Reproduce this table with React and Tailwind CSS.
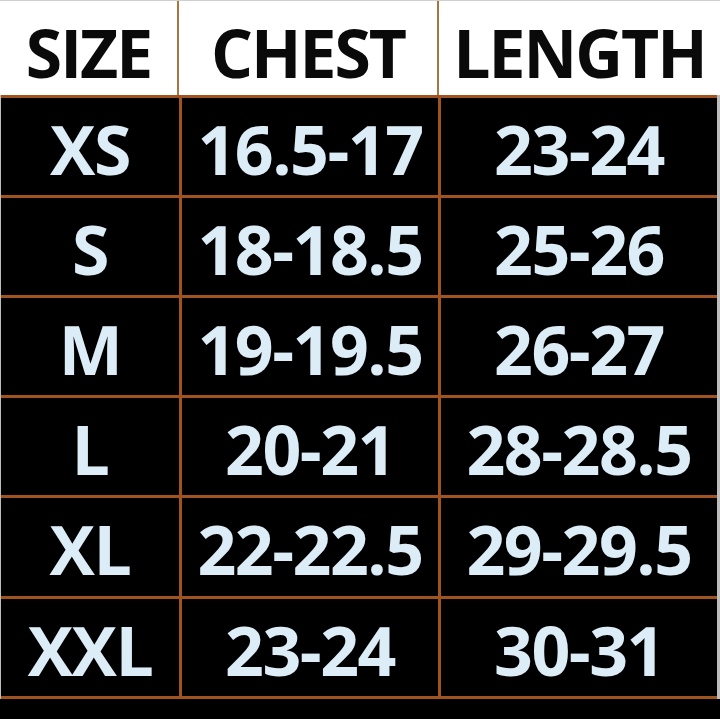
import React from "react";

const rows = [
  ["XS", "16.5-17", "23-24"],
  ["S", "18-18.5", "25-26"],
  ["M", "19-19.5", "26-27"],
  ["L", "20-21", "28-28.5"],
  ["XL", "22-22.5", "29-29.5"],
  ["XXL", "23-24", "30-31"],
];

const App = () => {
  return (
    <div className="w-[720px] h-[719px] overflow-hidden bg-black font-['Open_Sans',sans-serif] font-bold">
      <div className="grid grid-cols-[179px_260px_281px] h-[95px] bg-white text-[#0a0a0a] text-[66px] leading-none border-t border-[#cfcfcf]">
        <div className="flex items-center justify-center pt-2 border-r-2 border-[#a8743f] tracking-[-2px]">SIZE</div>
        <div className="flex items-center justify-center pt-2 border-r-2 border-[#a8743f] tracking-[-2px]">CHEST</div>
        <div className="flex items-center justify-center pt-2 tracking-[-2px]">LENGTH</div>
      </div>
      <div className="grid grid-cols-[178px_256px_276px] grid-rows-[97px_97px_97px_97px_98px_97px] gap-[3px] py-[3px] bg-[#a0531e] border-l border-r-[3px] border-[#bdbdbd] text-[#dcedf7] text-[68px] leading-none tracking-[-1.5px]">
        {rows.map((r) =>
          r.map((c, i) => (
            <div key={r[0] + i} className="bg-black flex items-center justify-center pt-1">
              {c}
            </div>
          ))
        )}
      </div>
    </div>
  );
};

export default App;
